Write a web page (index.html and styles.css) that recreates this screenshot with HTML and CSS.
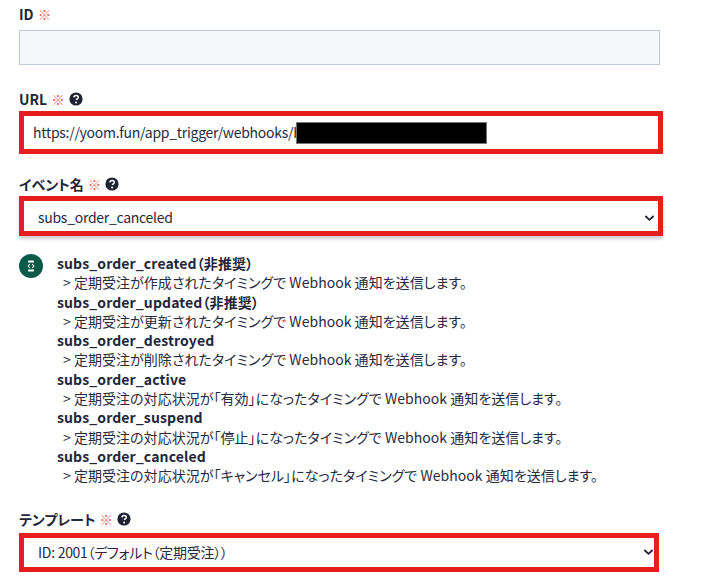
FILE: index.html
```html
<!DOCTYPE html>
<html lang="ja">
<head>
<meta charset="utf-8">
<title>Webhook</title>
<link rel="stylesheet" href="styles.css">
</head>
<body>
<form class="form">
  <div class="field field-id">
    <label class="label">ID <span class="req">※</span></label>
    <input class="input input-disabled" type="text" disabled>
  </div>
  <div class="field field-url">
    <label class="label">URL <span class="req">※</span>
      <svg class="help" viewBox="0 0 14 14"><circle cx="7" cy="7" r="6.6" fill="#1f2333"/><path d="M4.900 5.400c.1-1.300 1-2 2.200-2 1.300 0 2.200.8 2.200 1.900 0 .9-.5 1.300-1.100 1.700-.5.3-.8.6-.8 1.100" fill="none" stroke="#fff" stroke-width="1.500"/><circle cx="7.100" cy="10.400" r="1" fill="#fff"/></svg>
    </label>
    <div class="redbox redbox-url">
      <input class="control control-url" type="text" value="https://yoom.fun/app_trigger/webhooks/b">
      <span class="redact"></span>
    </div>
  </div>
  <div class="field field-event">
    <label class="label">イベント名 <span class="req">※</span>
      <svg class="help" viewBox="0 0 14 14"><circle cx="7" cy="7" r="6.6" fill="#1f2333"/><path d="M4.900 5.400c.1-1.300 1-2 2.200-2 1.300 0 2.200.8 2.200 1.900 0 .9-.5 1.300-1.100 1.700-.5.3-.8.6-.8 1.100" fill="none" stroke="#fff" stroke-width="1.500"/><circle cx="7.100" cy="10.400" r="1" fill="#fff"/></svg>
    </label>
    <div class="redbox redbox-select redbox-shadow">
      <select class="control select select-event"><option>subs_order_canceled</option></select>
      <svg class="chevron chevron-event" viewBox="0 0 12 8"><path d="M1.500 1.800 6 6l4.500-4.200" fill="none" stroke="#1f2333" stroke-width="2"/></svg>
    </div>
  </div>
  <div class="hint">
    <span class="hint-icon">
      <svg viewBox="0 0 24 24" width="24" height="24"><circle cx="12" cy="12" r="12" fill="#0a5a48"/><path d="M9 8.500V7.200C9 6.800 9.300 6.500 9.700 6.500h4.600c.4 0 .7.3.7.7v1.300zM9 15.500v1.300c0 .4.3.7.7.7h4.600c.4 0 .7-.3.7-.7v-1.300z" fill="#fff"/><path d="M10.700 10 9.200 12l1.500 2M13.300 10l1.500 2-1.500 2" fill="none" stroke="#fff" stroke-width="1.100"/></svg>
    </span>
    <div class="hint-body">
      <div class="ev">subs_order_created（非推奨）</div>
      <div class="desc">定期受注が作成されたタイミングで Webhook 通知を送信します。</div>
      <div class="ev">subs_order_updated（非推奨）</div>
      <div class="desc">定期受注が更新されたタイミングで Webhook 通知を送信します。</div>
      <div class="ev">subs_order_destroyed</div>
      <div class="desc">定期受注が削除されたタイミングで Webhook 通知を送信します。</div>
      <div class="ev">subs_order_active</div>
      <div class="desc">定期受注の対応状況が「有効」になったタイミングで Webhook 通知を送信します。</div>
      <div class="ev">subs_order_suspend</div>
      <div class="desc">定期受注の対応状況が「停止」になったタイミングで Webhook 通知を送信します。</div>
      <div class="ev">subs_order_canceled</div>
      <div class="desc">定期受注の対応状況が「キャンセル」になったタイミングで Webhook 通知を送信します。</div>
    </div>
  </div>
  <div class="field field-template">
    <label class="label">テンプレート <span class="req">※</span>
      <svg class="help" viewBox="0 0 14 14"><circle cx="7" cy="7" r="6.6" fill="#1f2333"/><path d="M4.900 5.400c.1-1.300 1-2 2.200-2 1.300 0 2.200.8 2.200 1.900 0 .9-.5 1.300-1.100 1.700-.5.3-.8.6-.8 1.100" fill="none" stroke="#fff" stroke-width="1.500"/><circle cx="7.100" cy="10.400" r="1" fill="#fff"/></svg>
    </label>
    <div class="redbox redbox-select redbox-template">
      <select class="control select"><option>ID: 2001（デフォルト（定期受注））</option></select>
      <svg class="chevron chevron-template" viewBox="0 0 12 8"><path d="M1.500 1.800 6 6l4.500-4.200" fill="none" stroke="#1f2333" stroke-width="2"/></svg>
    </div>
  </div>
</form>
</body>
</html>
```
FILE: styles.css
```css
* { box-sizing: border-box; }
html, body { margin: 0; padding: 0; background: #fff; }
body {
  width: 712px;
  height: 577px;
  overflow: hidden;
  font-family: "Noto Sans CJK JP", "Noto Sans", sans-serif;
  font-size: 14px;
  font-feature-settings: "palt";
  color: #272b40;
}
.form { display: flex; flex-direction: column; padding: 4px 0 0 19px; width: 663px; }
.field { display: flex; flex-direction: column; }
.label {
  display: flex;
  align-items: center;
  gap: 4px;
  height: 20px;
  font-size: 14px;
  font-weight: 700;
  color: #22263a;
}
.req { color: #ea6560; font-weight: 400; font-size: 13.500px; }
.help { width: 14px; height: 14px; margin-left: 0; }
.input { display: block; height: 35px; width: 641px; margin-top: 6px; }
.input-disabled { background: #f6f7fa; border: 1px solid #c2c8dc; }
.field-url { margin-top: 24px; }
.field-event { margin-top: 20px; }
.field-template { margin-top: 23.400px; }
.redbox {
  position: relative;
  height: 43px;
  width: 644px;
  margin-top: 2px;
  border: 5px solid #e81e1e;
  background: #fff;
}
.redbox-select { height: 40px; }
.redbox-shadow { box-shadow: 0 3px 3px rgba(60, 60, 70, .25); }
.redbox-template { width: 640px; margin-top: 4px; height: 39px; }
.control {
  display: block;
  width: 100%;
  height: 100%;
  border: 0;
  outline: 0;
  padding: 0 0 0 9px;
  background: transparent;
  font: 14px "Noto Sans CJK JP", "Noto Sans", sans-serif;
  font-feature-settings: "palt";
  letter-spacing: -.28px;
  color: #272b40;
}
.control-url { padding-bottom: 1px; }
.select { appearance: none; padding-left: 14px; }
.select-event { padding-top: 2px; }
.chevron { position: absolute; width: 11px; height: 8px; pointer-events: none; }
.chevron-event { right: 3px; top: 13px; }
.chevron-template { right: 0; top: 10px; }
.redact {
  position: absolute;
  left: 272px;
  top: 6px;
  width: 191px;
  height: 22px;
  background: #000;
  border: 1px solid #777;
}
.hint { display: flex; gap: 14px; margin-top: 18px; }
.hint-icon { flex: none; width: 24px; height: 24px; }
.hint-body { line-height: 19.300px; }
.ev { font-weight: 700; letter-spacing: .12px; color: #22263a; }
.desc { padding-left: 6px; letter-spacing: .03px; }
.desc::before { content: "> "; }
```
